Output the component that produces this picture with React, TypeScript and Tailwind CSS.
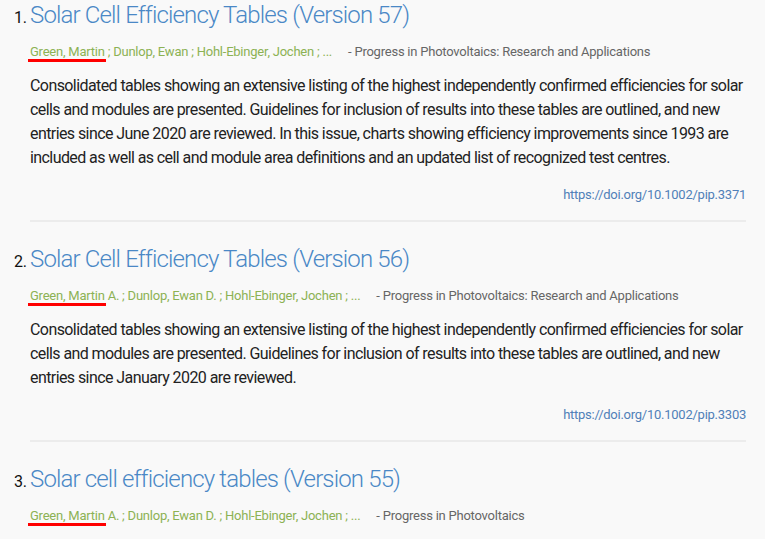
import React from "react";

type Item = {
  n: number;
  title: string;
  authors: string;
  journal: string;
  text: string;
  doi?: string;
};

const items: Item[] = [
  {
    n: 1,
    title: "Solar Cell Efficiency Tables (Version 57)",
    authors: "Green, Martin ; Dunlop, Ewan ; Hohl-Ebinger, Jochen ; ...",
    journal: "- Progress in Photovoltaics: Research and Applications",
    text: "Consolidated tables showing an extensive listing of the highest independently confirmed efficiencies for solar cells and modules are presented. Guidelines for inclusion of results into these tables are outlined, and new entries since June 2020 are reviewed. In this issue, charts showing efficiency improvements since 1993 are included as well as cell and module area definitions and an updated list of recognized test centres.",
    doi: "https://doi.org/10.1002/pip.3371",
  },
  {
    n: 2,
    title: "Solar Cell Efficiency Tables (Version 56)",
    authors: "Green, Martin A. ; Dunlop, Ewan D. ; Hohl-Ebinger, Jochen ; ...",
    journal: "- Progress in Photovoltaics: Research and Applications",
    text: "Consolidated tables showing an extensive listing of the highest independently confirmed efficiencies for solar cells and modules are presented. Guidelines for inclusion of results into these tables are outlined, and new entries since January 2020 are reviewed.",
    doi: "https://doi.org/10.1002/pip.3303",
  },
  {
    n: 3,
    title: "Solar cell efficiency tables (Version 55)",
    authors: "Green, Martin A. ; Dunlop, Ewan D. ; Hohl-Ebinger, Jochen ; ...",
    journal: "- Progress in Photovoltaics",
    text: "Consolidated tables showing an extensive listing of the highest independently confirmed efficiencies for solar cells and modules are presented.",
  },
];

const Result = ({ item }: { item: Item }) => (
  <li className="flex flex-col">
    <div className="flex items-baseline h-[30px] -ml-[16px]">
      <span className="w-[16px] text-[16px] text-[#111] leading-none tracking-[-0.3px]">{item.n}.</span>
      <a className="text-[24px] font-light leading-[30px] text-[#4a88c6] tracking-[-0.85px] whitespace-nowrap">{item.title}</a>
    </div>
    <div className="relative flex mt-3 text-[13px] leading-5 tracking-[-0.23px] whitespace-nowrap">
      <span className="text-[#8cb254]">{item.authors}</span>
      <span className="ml-4 text-[#666]">{item.journal}</span>
      <div className="absolute left-[-2px] top-[17px] w-[78px] h-[3px] bg-[#f00]" />
    </div>
    <p className="mt-3 text-[16px] leading-6 text-[#222] tracking-[-0.58px]">{item.text}</p>
    {item.doi && (
      <>
        <div className="mt-[15px] text-right text-[13px] leading-5 text-[#5080b8] tracking-[-0.25px]">{item.doi}</div>
        <div className="mt-[15px] mb-[22px] h-[2px] bg-[#ececec]" />
      </>
    )}
  </li>
);

export default function App() {
  return (
    <div className="w-[765px] h-[539px] overflow-hidden bg-[#f9f9f9] font-['Roboto',sans-serif]">
      <ol className="pl-[30px] pr-[19px]">
        {items.map((it) => (
          <Result key={it.n} item={it} />
        ))}
      </ol>
    </div>
  );
}
